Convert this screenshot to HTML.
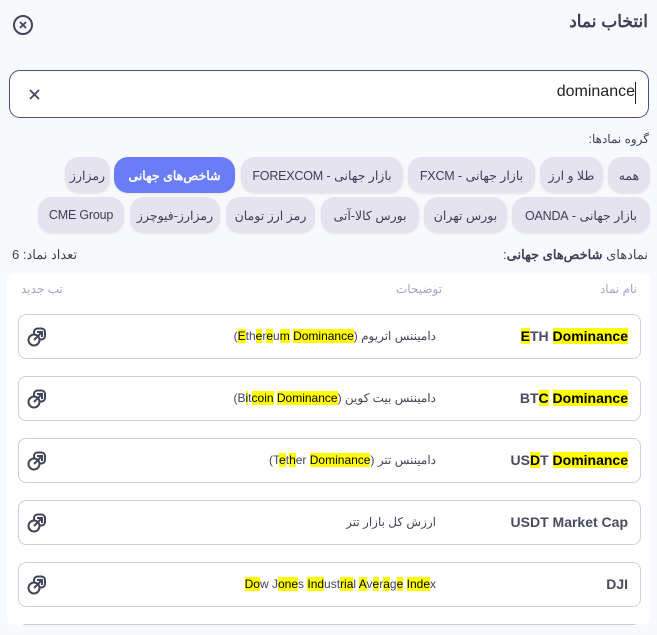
<!DOCTYPE html>
<html><head><meta charset="utf-8"><style>
*{box-sizing:border-box;margin:0;padding:0}
html,body{width:657px;height:635px;overflow:hidden}
body{background:#f8f9fd;font-family:"Liberation Sans","Noto Sans CJK SC",sans-serif;color:#3f3f57;position:relative}
.a{position:absolute}
.chip{position:absolute;height:36px;border-radius:14px;background:#e4e3ef;display:flex;align-items:center;justify-content:center;font-size:12.5px;letter-spacing:-0.2px;color:#3f3f57;white-space:nowrap;direction:rtl;box-shadow:0 1px 2px rgba(0,0,0,.08)}
.chip.on{background:#6a7cf6;color:#fff;font-weight:bold}
.row{position:absolute;left:18px;width:623px;height:45px;border:1px solid #cfcde3;border-radius:8px;background:#fff}
.nm{position:absolute;right:12px;top:13px;font-size:14px;font-weight:bold;color:#4a4a62;white-space:nowrap}
.ds{position:absolute;right:204px;top:14px;font-size:12px;color:#44445a;white-space:nowrap;direction:ltr;text-align:right}
.h{background:#ffff00;color:#000}
.ic{position:absolute;left:8px;top:12px}
</style></head><body>
<div class="a" style="right:9px;top:12px;font-size:17px;font-weight:bold;direction:rtl">انتخاب نماد</div>
<svg class="a" style="left:12px;top:14px" width="22" height="22" viewBox="0 0 22 22"><circle cx="11" cy="11" r="9" fill="none" stroke="#44445a" stroke-width="2"/><path d="M8 8l6 6M14 8l-6 6" stroke="#44445a" stroke-width="1.8"/></svg>
<div class="a" style="left:9px;top:70px;width:640px;height:48px;border:1.5px solid #4d4d80;border-radius:11px;background:#fff"></div>
<svg class="a" style="left:28px;top:88px" width="13" height="13"><path d="M2 2l9 9M11 2L2 11" stroke="#44445a" stroke-width="1.8"/></svg>
<div class="a" style="right:22px;top:83px;font-size:16px;color:#222">dominance</div>
<div class="a" style="left:635px;top:82px;width:1px;height:22px;background:#222"></div>
<div class="a" style="right:8px;top:132px;font-size:12px;direction:rtl">گروه نمادها:</div>
<div class="chip" style="left:608px;top:157px;width:42px">همه</div>
<div class="chip" style="left:540px;top:157px;width:63px">طلا و ارز</div>
<div class="chip" style="left:408px;top:157px;width:127px">بازار جهانی - FXCM</div>
<div class="chip" style="left:241px;top:157px;width:162px">بازار جهانی - FOREXCOM</div>
<div class="chip on" style="left:114px;top:157px;width:121px">شاخص‌های جهانی</div>
<div class="chip" style="left:65px;top:157px;width:45px">رمزارز</div>
<div class="chip" style="left:512px;top:197px;width:138px">بازار جهانی - OANDA</div>
<div class="chip" style="left:424px;top:197px;width:83px">بورس تهران</div>
<div class="chip" style="left:321px;top:197px;width:98px">بورس کالا-آتی</div>
<div class="chip" style="left:226px;top:197px;width:89px">رمز ارز تومان</div>
<div class="chip" style="left:130px;top:197px;width:90px">رمزارز-فیوچرز</div>
<div class="chip" style="left:38px;top:197px;width:86px">CME Group</div>
<div class="a" style="right:9px;top:247px;font-size:13px;direction:rtl">نمادهای <b>شاخص‌های جهانی</b>:</div>
<div class="a" style="left:12px;top:247px;font-size:13px;direction:rtl">تعداد نماد: 6</div>
<div class="a" style="left:7px;top:273px;width:643px;height:352px;background:#fff;border-radius:8px"></div>
<div class="a" style="right:20px;top:282px;font-size:12px;color:#a6a4c6;direction:rtl">نام نماد</div>
<div class="a" style="left:396px;top:282px;font-size:12px;color:#a6a4c6;direction:rtl">توضیحات</div>
<div class="a" style="left:21px;top:282px;font-size:12px;color:#a6a4c6;direction:rtl">تب جدید</div>

<div class="row" style="top:314px"><div class="nm"><span class="h">E</span>TH <span class="h">Dominance</span></div><div class="ds">(<span class="h">E</span>th<span class="h">e</span>r<span class="h">e</span>u<span class="h">m</span> <span class="h">Dominance</span>) دامیننس اتریوم</div><svg class="ic" width="20" height="20" viewBox="0 0 20 20"><rect x="7" y="1.5" width="11" height="11" rx="3.5" fill="none" stroke="#44445a" stroke-width="2"/><circle cx="7" cy="13" r="5.5" fill="#fff" stroke="#44445a" stroke-width="2"/><path d="M7 13l8-8M10 5h5v5" fill="none" stroke="#44445a" stroke-width="2"/></svg></div>
<div class="row" style="top:376px"><div class="nm">BT<span class="h">C</span> <span class="h">Dominance</span></div><div class="ds">(B<span class="h">i</span>t<span class="h">coin</span> <span class="h">Dominance</span>) دامیننس بیت کوین</div><svg class="ic" width="20" height="20" viewBox="0 0 20 20"><rect x="7" y="1.5" width="11" height="11" rx="3.5" fill="none" stroke="#44445a" stroke-width="2"/><circle cx="7" cy="13" r="5.5" fill="#fff" stroke="#44445a" stroke-width="2"/><path d="M7 13l8-8M10 5h5v5" fill="none" stroke="#44445a" stroke-width="2"/></svg></div>
<div class="row" style="top:438px"><div class="nm">US<span class="h">D</span>T <span class="h">Dominance</span></div><div class="ds">(T<span class="h">e</span>t<span class="h">h</span>er <span class="h">Dominance</span>) دامیننس تتر</div><svg class="ic" width="20" height="20" viewBox="0 0 20 20"><rect x="7" y="1.5" width="11" height="11" rx="3.5" fill="none" stroke="#44445a" stroke-width="2"/><circle cx="7" cy="13" r="5.5" fill="#fff" stroke="#44445a" stroke-width="2"/><path d="M7 13l8-8M10 5h5v5" fill="none" stroke="#44445a" stroke-width="2"/></svg></div>
<div class="row" style="top:500px"><div class="nm">USDT Market Cap</div><div class="ds" style="direction:rtl">ارزش کل بازار تتر</div><svg class="ic" width="20" height="20" viewBox="0 0 20 20"><rect x="7" y="1.5" width="11" height="11" rx="3.5" fill="none" stroke="#44445a" stroke-width="2"/><circle cx="7" cy="13" r="5.5" fill="#fff" stroke="#44445a" stroke-width="2"/><path d="M7 13l8-8M10 5h5v5" fill="none" stroke="#44445a" stroke-width="2"/></svg></div>
<div class="row" style="top:562px"><div class="nm">DJI</div><div class="ds"><span class="h">Do</span>w J<span class="h">one</span>s <span class="h">Ind</span>ust<span class="h">ria</span>l <span class="h">A</span>v<span class="h">e</span>r<span class="h">a</span>g<span class="h">e</span> <span class="h">Inde</span>x</div><svg class="ic" width="20" height="20" viewBox="0 0 20 20"><rect x="7" y="1.5" width="11" height="11" rx="3.5" fill="none" stroke="#44445a" stroke-width="2"/><circle cx="7" cy="13" r="5.5" fill="#fff" stroke="#44445a" stroke-width="2"/><path d="M7 13l8-8M10 5h5v5" fill="none" stroke="#44445a" stroke-width="2"/></svg></div>
<div class="row" style="top:624px;height:11px;border-bottom:none;border-radius:8px 8px 0 0"></div>
<div class="a" style="left:0;top:625px;width:657px;height:10px;background:#f8f9fd"></div>
</body></html>
